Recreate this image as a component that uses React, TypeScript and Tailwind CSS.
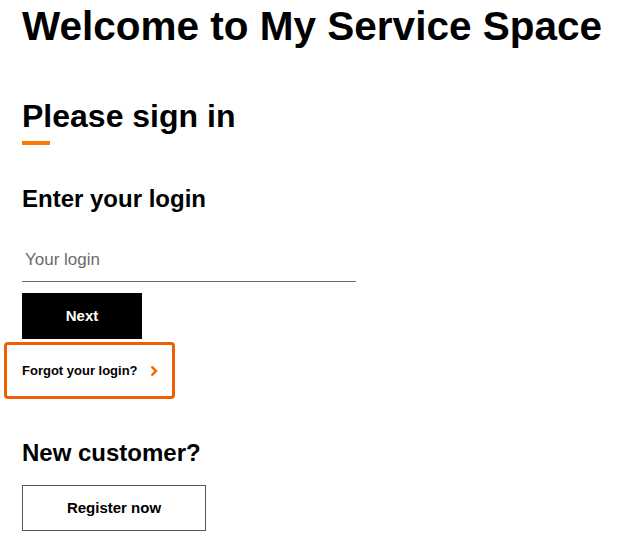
import React from "react";

export default function App() {
  return (
    <div className="min-h-[556px] w-[630px] bg-white text-black" style={{ fontFamily: '"Liberation Sans", Arial, Helvetica, sans-serif' }}>
      <div className="flex flex-col px-[22px] pt-[6px]">
        <h1 className="text-[40.5px] leading-[40px] font-bold">Welcome to My Service Space</h1>

        <h2 className="mt-[54px] text-[32px] leading-[32px] font-bold">Please sign in</h2>
        <div className="mt-[9px] h-[4px] w-[28px] bg-[#ff7900]" />

        <h3 className="mt-[42px] text-[24px] leading-[24px] font-bold">Enter your login</h3>

        <div className="mt-[37px] w-[334px] border-b border-[#6b6b6b] pb-[9px] pl-[3px]">
          <input
            className="w-full bg-transparent text-[17px] leading-[22px] text-black outline-none placeholder:text-[#6b6b6b]"
            placeholder="Your login"
          />
        </div>

        <button className="mt-[11px] flex h-[46px] w-[120px] items-center justify-center bg-black text-[15px] font-bold text-white">
          Next
        </button>

        <div className="-ml-[18px] mt-[3px] flex h-[57px] w-[171px] items-center rounded-[4px] border-[3px] border-[#f15e00] pl-[15px]">
          <span className="text-[13px] font-bold leading-[16px]">Forgot your login?</span>
          <svg className="ml-[13px]" width="7" height="10" viewBox="0 0 7 10" fill="none">
            <path d="M1.4 1.4 L5 5 L1.4 8.6" stroke="#f16e00" strokeWidth="2.6" strokeLinecap="square" />
          </svg>
        </div>

        <h3 className="mt-[42px] text-[24px] leading-[24px] font-bold">New customer?</h3>

        <button className="mt-[20px] flex h-[46px] w-[184px] items-center justify-center border border-[#555] text-[15px] font-bold text-black">
          Register now
        </button>
      </div>
    </div>
  );
}
